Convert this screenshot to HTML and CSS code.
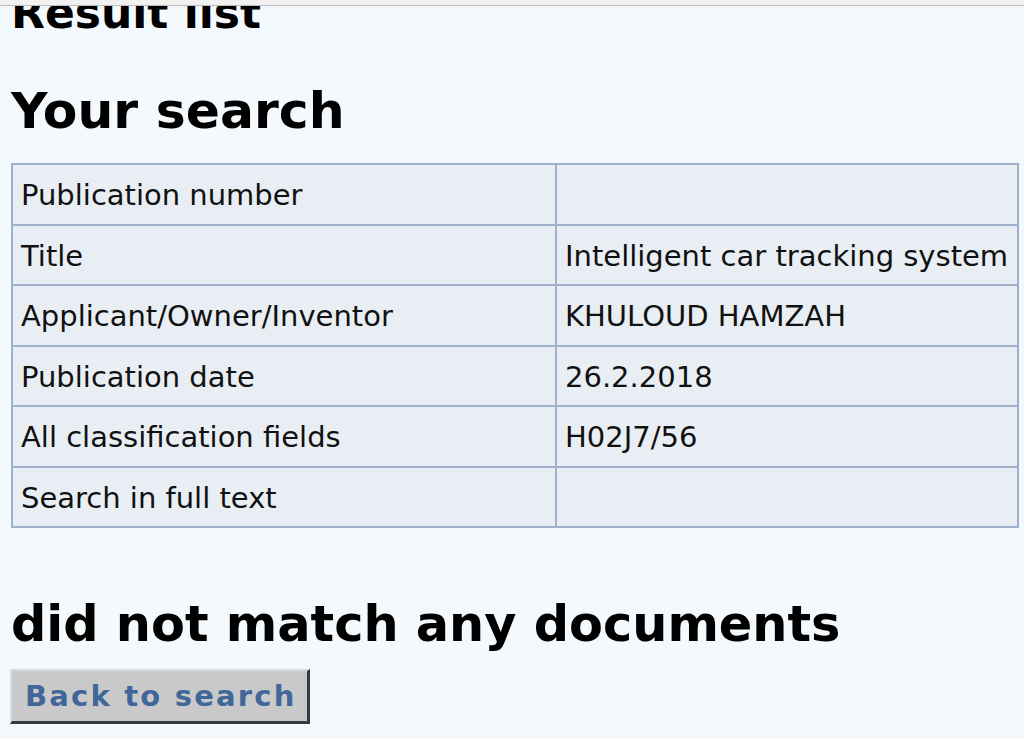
FILE: index.html
```html
<!DOCTYPE html>
<html lang="en">
<head>
<meta charset="utf-8">
<title>Result list</title>
<link rel="stylesheet" href="styles.css">
</head>
<body>
<div class="topbar"></div>
<main class="page">
  <h1 class="title">Result list</h1>
  <h2 class="heading">Your search</h2>
  <table class="query">
    <colgroup><col class="c1"><col class="c2"></colgroup>
    <tbody>
      <tr><td>Publication number</td><td></td></tr>
      <tr><td>Title</td><td>Intelligent car tracking system</td></tr>
      <tr><td>Applicant/Owner/Inventor</td><td>KHULOUD HAMZAH</td></tr>
      <tr><td>Publication date</td><td>26.2.2018</td></tr>
      <tr><td>All classification fields</td><td>H02J7/56</td></tr>
      <tr><td>Search in full text</td><td></td></tr>
    </tbody>
  </table>
  <h2 class="heading nomatch">did not match any documents</h2>
  <button class="back" type="button">Back to search</button>
</main>
</body>
</html>
```

FILE: styles.css
```css
html, body {
  margin: 0;
  padding: 0;
  background: #f3f9fc;
  font-family: "DejaVu Sans", Verdana, sans-serif;
  color: #000;
  overflow: hidden;
}
.topbar {
  position: fixed;
  top: 0;
  left: 0;
  right: 0;
  height: 5px;
  background: #f1f1f1;
  border-bottom: 1px solid #bcbcbc;
  z-index: 2;
}
.page {
  padding: 0 0 0 11px;
}
.title {
  margin: -9px 0 0;
  font-size: 44px;
  line-height: 44px;
  font-weight: bold;
}
.heading {
  margin: 51px 0 0;
  font-size: 50.4px;
  line-height: 49px;
  font-weight: bold;
}
.query {
  margin-top: 28px;
  border-collapse: collapse;
  width: 1006px;
  table-layout: fixed;
  font-size: 29px;
  color: #111;
}
.query .c1 { width: 544px; }
.query .c2 { width: 462px; }
.query td {
  height: 56.5px;
  padding: 2px 0 0 8px;
  background: #e9eef4;
  border: 2px solid #9fb0cd;
  vertical-align: middle;
  white-space: nowrap;
}
.nomatch {
  margin-top: 72px;
  font-size: 49.4px;
}
.back {
  display: block;
  margin: 20px 0 0 -1px;
  width: 300px;
  height: 55px;
  padding: 0 0 0 13px;
  text-align: left;
  background: #c9c9c9;
  border-style: solid;
  border-width: 2px 3px 3px 2px;
  border-color: #dcdcdc #3a3a3a #3a3a3a #dcdcdc;
  font-family: "DejaVu Sans", Verdana, sans-serif;
  font-size: 29px;
  font-weight: bold;
  letter-spacing: 2.2px;
  color: #41679a;
}
```
